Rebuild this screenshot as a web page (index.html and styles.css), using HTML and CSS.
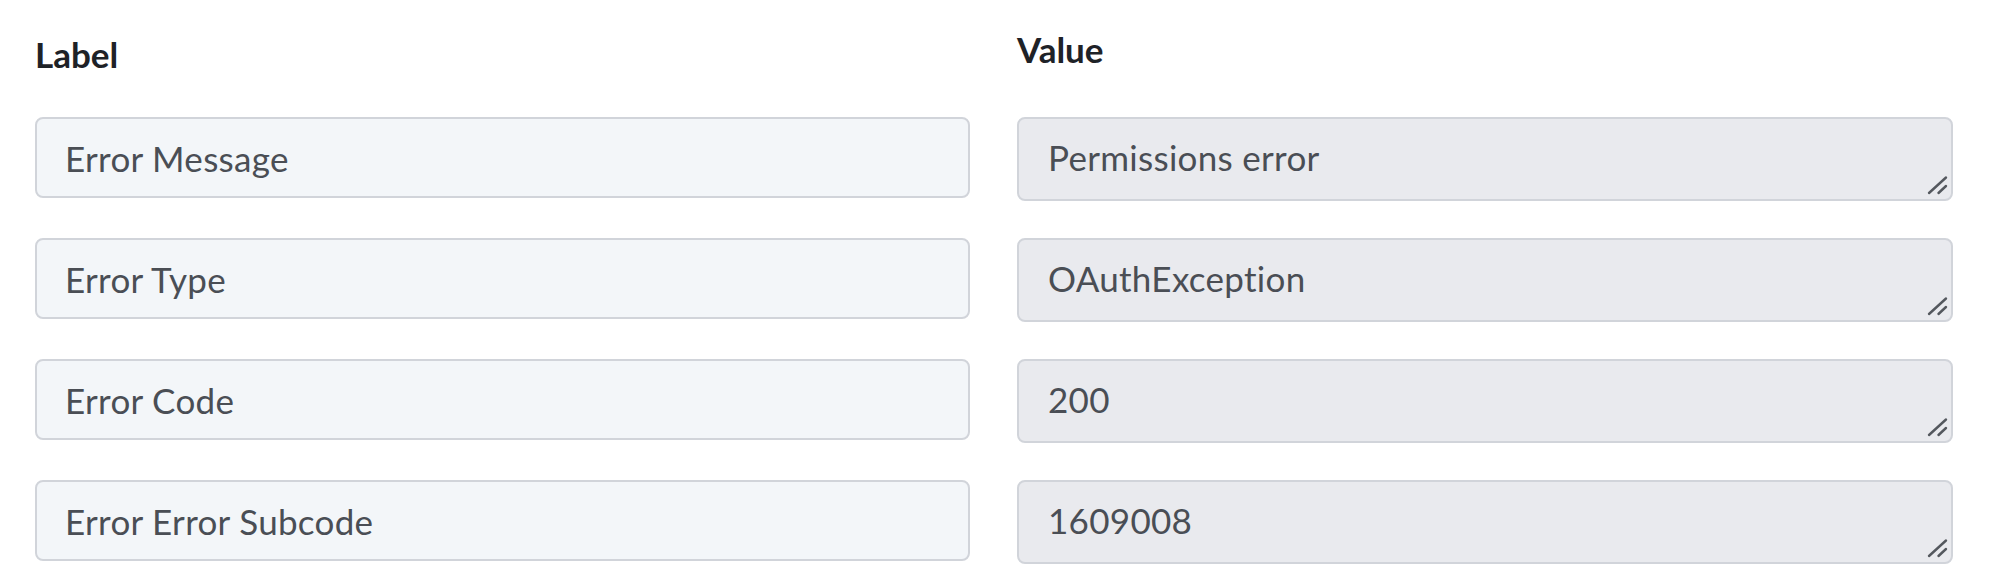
FILE: index.html
```html
<!DOCTYPE html>
<html lang="en">
<head>
<meta charset="utf-8">
<title>Error fields</title>
<link rel="stylesheet" href="styles.css">
</head>
<body>
<div class="mapping">
  <div class="col col-label">
    <div class="head head-label">Label</div>
    <input class="field field-label" type="text" readonly value="Error Message">
    <input class="field field-label" type="text" readonly value="Error Type">
    <input class="field field-label" type="text" readonly value="Error Code">
    <input class="field field-label" type="text" readonly value="Error Error Subcode">
  </div>
  <div class="col col-value">
    <div class="head head-value">Value</div>
    <div class="value-box">
      <textarea class="field field-value" readonly>Permissions error</textarea>
      <svg class="grip" viewBox="0 0 24 24" width="24" height="24" aria-hidden="true"><path d="M3 20 L20 4.5 M12.5 20 L20 13" /></svg>
    </div>
    <div class="value-box">
      <textarea class="field field-value" readonly>OAuthException</textarea>
      <svg class="grip" viewBox="0 0 24 24" width="24" height="24" aria-hidden="true"><path d="M3 20 L20 4.5 M12.5 20 L20 13" /></svg>
    </div>
    <div class="value-box">
      <textarea class="field field-value" readonly>200</textarea>
      <svg class="grip" viewBox="0 0 24 24" width="24" height="24" aria-hidden="true"><path d="M3 20 L20 4.5 M12.5 20 L20 13" /></svg>
    </div>
    <div class="value-box">
      <textarea class="field field-value" readonly>1609008</textarea>
      <svg class="grip" viewBox="0 0 24 24" width="24" height="24" aria-hidden="true"><path d="M3 20 L20 4.5 M12.5 20 L20 13" /></svg>
    </div>
  </div>
</div>
</body>
</html>
```
FILE: styles.css
```css
html, body {
  margin: 0;
  padding: 0;
  background: #ffffff;
}

body {
  font-family: Lato, "Open Sans", "Liberation Sans", sans-serif;
  font-size: 35px;
  line-height: 42px;
  color: #1e2227;
}

.mapping {
  display: flex;
  gap: 47px;
  padding-left: 35px;
}

.col {
  display: flex;
  flex-direction: column;
}

.col-label {
  width: 935px;
  gap: 40px;
}

.col-value {
  width: 936px;
  gap: 37px;
}

.head {
  box-sizing: border-box;
  font-weight: 700;
  color: #1e2227;
}

.head-label {
  height: 77px;
  padding-top: 33px;
}

.head-value {
  height: 80px;
  padding-top: 28px;
}

.field {
  box-sizing: border-box;
  width: 100%;
  margin: 0;
  font: inherit;
  font-size: 35px;
  line-height: 42px;
  letter-spacing: 0.3px;
  color: #4a4e55;
  border: 2px solid #d1d4da;
  border-radius: 8px;
  outline: none;
}

.field-label {
  height: 81px;
  padding: 0 28px;
  background: #f3f6f9;
}

.value-box {
  position: relative;
  height: 84px;
}

.field-value {
  display: block;
  height: 84px;
  padding: 17px 29px 0;
  background: #e9eaee;
  resize: none;
  overflow: hidden;
}

.grip {
  position: absolute;
  right: 3px;
  bottom: 4px;
  fill: none;
  stroke: #54585e;
  stroke-width: 2.4;
  stroke-linecap: round;
}
```
